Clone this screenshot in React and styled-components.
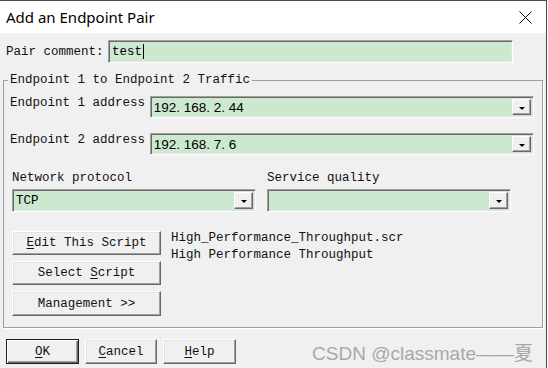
import React from 'react'
import styled, { createGlobalStyle, css } from 'styled-components'

const GlobalStyle = createGlobalStyle`
	html, body {
		margin: 0;
		padding: 0;
		background: #ffffff;
	}
	body {
		font-family: 'Liberation Mono', 'Courier New', monospace;
	}
`

const Window = styled.div`
	box-sizing: border-box;
	width: 547px;
	height: 368px;
	background: #f0f0f0;
	border-top: 1px solid #4a4a4a;
	border-right: 1px solid #4a4a4a;
	display: flex;
	flex-direction: column;
	overflow: hidden;
`

const TitleBar = styled.div`
	flex: none;
	height: 32px;
	background: #ffffff;
	display: flex;
	align-items: center;
	justify-content: space-between;
	padding: 0 14px 0 6px;
`

const Title = styled.span`
	font-family: 'Noto Sans', 'Open Sans', sans-serif;
	font-size: 15px;
	color: #000000;
`

const Body = styled.div`
	flex: 1;
	display: flex;
	flex-direction: column;
	padding: 7px 3px 0 3px;
`

const Text = styled.span`
	font-size: 12.5px;
	line-height: 14px;
	color: #111111;
	white-space: pre;
`

const CommentRow = styled.div`
	display: flex;
	align-items: center;
	padding-left: 3px;
`

const CommentLabel = styled(Text)`
	width: 102px;
`

const Sunken = styled.div`
	box-sizing: border-box;
	width: ${p => p.$w}px;
	height: ${p => p.$h}px;
	display: flex;
	align-items: center;
	background: #cce8cf;
	border: 1px solid;
	border-color: #a0a0a0 #ffffff #ffffff #a0a0a0;
	box-shadow: inset 1px 1px 0 #696969, inset -1px -1px 0 #e3e3e3;
	padding: 2px 2px 2px 3px;
`

const Caret = styled.span`
	display: inline-block;
	width: 1px;
	height: 15px;
	background: #000000;
	margin-left: 1px;
`

const IpText = styled.span`
	flex: 1;
	font-family: 'Liberation Sans', Arial, sans-serif;
	font-size: 13.5px;
	color: #000000;
	white-space: pre;
`

const FieldText = styled(Text)`
	flex: ${p => (p.$fill ? 1 : 'none')};
	color: #000000;
`

const DropButton = styled.div`
	box-sizing: border-box;
	flex: none;
	align-self: stretch;
	width: 19px;
	margin-left: auto;
	display: flex;
	align-items: center;
	justify-content: center;
	background: #f0f0f0;
	border: 1px solid;
	border-color: #ffffff #696969 #696969 #ffffff;
	box-shadow: inset -1px -1px 0 #a0a0a0;

	&::after {
		content: '';
		margin-top: 2px;
		border-left: 3px solid transparent;
		border-right: 3px solid transparent;
		border-top: 3px solid #000000;
	}
`

const Group = styled.fieldset`
	margin: 10px 0 0 0;
	padding: 9px 8px 11px 6px;
	min-width: 0;
	border: 1px solid #a0a0a0;
	box-shadow: 1px 1px 0 #ffffff;
	display: flex;
	flex-direction: column;
`

const Legend = styled.legend`
	font-size: 12.5px;
	line-height: 14px;
	color: #111111;
	padding: 0 2px;
	margin-left: -2px;
`

const AddressRow = styled.div`
	display: flex;
	align-items: flex-start;
	margin-top: ${p => p.$top || 0}px;
`

const AddressLabel = styled(Text)`
	width: 140px;
`

const SelectRow = styled.div`
	display: flex;
	gap: 11px;
	margin: 16px 0 0 2px;
`

const SelectColumn = styled.div`
	display: flex;
	flex-direction: column;
	gap: 4px;
`

const ScriptRow = styled.div`
	display: flex;
	align-items: flex-start;
	gap: 10px;
	margin: 19px 0 0 2px;
`

const ButtonColumn = styled.div`
	display: flex;
	flex-direction: column;
	gap: 6px;
`

const ScriptInfo = styled.div`
	display: flex;
	flex-direction: column;
	font-size: 12.5px;
	line-height: 17px;
	color: #111111;
	margin-top: -1px;
`

const Button = styled.button`
	box-sizing: border-box;
	width: ${p => p.$w}px;
	height: ${p => p.$h || 24}px;
	padding: 0;
	background: #f0f0f0;
	font-family: 'Liberation Mono', 'Courier New', monospace;
	font-size: 12.5px;
	line-height: 14px;
	color: #111111;
	border: 1px solid;
	border-color: #ffffff #696969 #696969 #ffffff;
	box-shadow: inset -1px -1px 0 #a0a0a0, inset 1px 1px 0 #e3e3e3;
	white-space: pre;

	${p => p.$default && css`
		border-color: #1e1e1e;
		box-shadow: inset 1px 1px 0 #ffffff, inset -1px -1px 0 #696969, inset -2px -2px 0 #a0a0a0;
	`}
`

const Key = styled.span`
	text-decoration: underline;
	text-underline-offset: 2px;
`

const Footer = styled.div`
	display: flex;
	align-items: center;
	gap: 6px;
	margin-top: 10px;
	padding-left: 3px;
`

const Watermark = styled.span`
	margin: 0 10px 0 auto;
	font-family: 'Liberation Sans', Arial, 'Noto Sans CJK SC', sans-serif;
	font-size: 19px;
	color: #a8a8a8;
	white-space: pre;
`

function Combo({ w, h, children }) {
	return (
		<Sunken $w={w} $h={h}>
			{children}
			<DropButton />
		</Sunken>
	)
}

export default function App() {
	return (
		<>
			<GlobalStyle />
			<Window>
				<TitleBar>
					<Title>Add an Endpoint Pair</Title>
					<svg width="13" height="13" viewBox="0 0 13 13">
						<path d="M0.5 0.5 L12.5 12.5 M12.5 0.5 L0.5 12.5" stroke="#000" strokeWidth="1" fill="none" />
					</svg>
				</TitleBar>
				<Body>
					<CommentRow>
						<CommentLabel>Pair comment:</CommentLabel>
						<Sunken $w={405} $h={23}>
							<FieldText>test</FieldText>
							<Caret />
						</Sunken>
					</CommentRow>

					<Group>
						<Legend>Endpoint 1 to Endpoint 2 Traffic</Legend>
						<AddressRow>
							<AddressLabel>Endpoint 1 address</AddressLabel>
							<Combo w={385} h={22}>
								<IpText>192. 168. 2. 44</IpText>
							</Combo>
						</AddressRow>
						<AddressRow $top={15}>
							<AddressLabel>Endpoint 2 address</AddressLabel>
							<Combo w={385} h={22}>
								<IpText>192. 168. 7. 6</IpText>
							</Combo>
						</AddressRow>

						<SelectRow>
							<SelectColumn>
								<Text>Network protocol</Text>
								<Combo w={244} h={23}>
									<FieldText $fill>TCP</FieldText>
								</Combo>
							</SelectColumn>
							<SelectColumn>
								<Text>Service quality</Text>
								<Combo w={244} h={23} />
							</SelectColumn>
						</SelectRow>

						<ScriptRow>
							<ButtonColumn>
								<Button $w={149}><Key>E</Key>dit This Script</Button>
								<Button $w={149}>Select <Key>S</Key>cript</Button>
								<Button $w={149} $h={25}>Management &gt;&gt;</Button>
							</ButtonColumn>
							<ScriptInfo>
								<span>High_Performance_Throughput.scr</span>
								<span>High Performance Throughput</span>
							</ScriptInfo>
						</ScriptRow>
					</Group>

					<Footer>
						<Button $w={73} $h={25} $default><Key>O</Key>K</Button>
						<Button $w={72} $h={25}><Key>C</Key>ancel</Button>
						<Button $w={73} $h={25}><Key>H</Key>elp</Button>
						<Watermark>CSDN @classmate——夏</Watermark>
					</Footer>
				</Body>
			</Window>
		</>
	)
}
